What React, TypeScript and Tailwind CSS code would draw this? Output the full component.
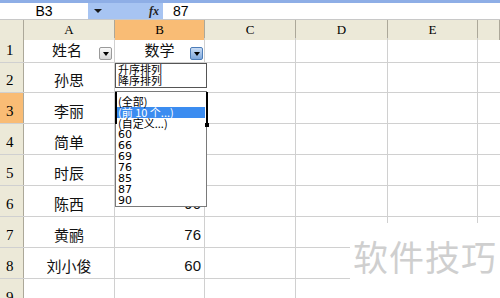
import React from 'react'

const rows: { n: number; name: string; score: string; h: string }[] = [
  { n: 1, name: '姓名', score: '数学', h: 'h-[25px]' },
  { n: 2, name: '孙思', score: '', h: 'h-[30px]' },
  { n: 3, name: '李丽', score: '87', h: 'h-[31px]' },
  { n: 4, name: '简单', score: '', h: 'h-[31px]' },
  { n: 5, name: '时辰', score: '', h: 'h-[31px]' },
  { n: 6, name: '陈西', score: '90', h: 'h-[31px]' },
  { n: 7, name: '黄鹂', score: '76', h: 'h-[31px]' },
  { n: 8, name: '刘小俊', score: '60', h: 'h-[31px]' },
  { n: 9, name: '', score: '', h: 'h-[31px]' },
]

const cols = ['A', 'B', 'C', 'D', 'E', '']

const serif = { fontFamily: '"Liberation Serif", "DejaVu Serif", serif' }
const cjk = { fontFamily: '"Noto Sans CJK SC", "Noto Sans", sans-serif' }

function FilterButton({ active }: { active?: boolean }) {
  return (
    <div
      className={
        'w-[13px] h-[13px] rounded-[2px] border flex items-center justify-center ' +
        (active
          ? 'border-[#4d7db8] bg-gradient-to-b from-[#c9dcf4] to-[#7ea7db]'
          : 'border-[#9a9a9a] bg-gradient-to-b from-[#fafafa] to-[#d6d6d6]')
      }
    >
      <div className="w-0 h-0 border-l-[3px] border-r-[3px] border-t-[4px] border-l-transparent border-r-transparent border-t-black" />
    </div>
  )
}

function FilterDropdown() {
  const items = ['60', '66', '69', '76', '85', '87', '90']
  return (
    <div className="absolute left-[115px] top-[63px] w-[92px] flex flex-col text-black">
      <div className="h-[25px] bg-white border border-[#555] px-[2px] text-[11px] leading-[11px]" style={cjk}>
        <div>升序排列</div>
        <div>降序排列</div>
      </div>
      <div className="h-[3px] bg-white" />
      <div className="relative h-[116px] bg-white border border-[#7a7a7a] pt-[4px] px-[1px]">
        <div className="absolute -left-[1px] top-0 w-[2px] h-[32px] bg-black" />
        <div className="absolute -right-[2px] top-0 w-[2px] h-[33px] bg-black" />
        <div className="absolute -right-[3px] top-[31px] w-[4px] h-[4px] bg-black" />
        <div className="h-[11px] leading-[11px] text-[11px] px-[1px]" style={cjk}>(全部)</div>
        <div className="h-[11px] leading-[11px] text-[11px] px-[1px] bg-[#3b8cf0] text-white" style={cjk}>(前 10 个...)</div>
        <div className="h-[11px] leading-[11px] text-[11px] px-[1px]" style={cjk}>(自定义...)</div>
        {items.map(v => (
          <div key={v} className="h-[11px] leading-[11px] text-[11px] px-[1px]" style={{ fontFamily: '"DejaVu Sans", sans-serif' }}>
            {v}
          </div>
        ))}
      </div>
    </div>
  )
}

export default function App() {
  return (
    <div className="relative w-[500px] h-[298px] overflow-hidden bg-white">
      {/* Formula bar */}
      <div className="h-[20px] flex bg-[#a7c4f2] border-t-[3px] border-[#8eaee6] border-b border-b-[#c8c8c8]">
        <div className="w-[88px] bg-white flex items-center justify-center text-[14px] text-black" style={{ fontFamily: '"Liberation Sans", sans-serif' }}>
          B3
        </div>
        <div className="w-[75px] flex items-center justify-between pl-[6px] pr-[4px]">
          <div className="w-0 h-0 border-l-[4px] border-r-[4px] border-t-[4px] border-l-transparent border-r-transparent border-t-[#1a1a1a]" />
          <span className="text-[12px] italic font-bold text-[#222]" style={serif}>fx</span>
        </div>
        <div className="flex-1 bg-white flex items-center pl-[10px] text-[14px] text-black" style={{ fontFamily: '"Liberation Sans", sans-serif' }}>
          87
        </div>
      </div>

      {/* Column headers */}
      <div className="grid grid-cols-[24px_91px_90px_91px_92px_90px_22px] h-[18px] border-b border-[#aca899] text-[13px] text-black" style={serif}>
        <div className="bg-[#ece9d8] border-r border-[#aca899]" />
        {cols.map((c, i) => (
          <div
            key={i}
            className={
              'flex items-center justify-center border-r border-[#aca899] ' +
              (c === 'B' ? 'bg-[#f9bc75]' : 'bg-[#ece9d8]')
            }
          >
            {c}
          </div>
        ))}
      </div>

      {/* Rows */}
      {rows.map(r => (
        <div key={r.n} className={'grid grid-cols-[24px_91px_90px_91px_92px_90px_22px] border-b border-[#d0d0d0] ' + r.h}>
          <div
            className={
              'flex items-end pl-[6px] pb-[1px] text-[15px] text-black border-r border-[#aca899] ' +
              (r.n === 3 ? 'bg-[#f9bc75]' : 'bg-[#ece9d8]')
            }
            style={serif}
          >
            {r.n}
          </div>
          <div className="relative flex items-end justify-center pb-[1px] text-[15px] text-[#111] border-r border-[#d0d0d0]" style={cjk}>
            <span className={r.n === 1 ? 'mr-[4px]' : ''}>{r.name}</span>
            {r.n === 1 && (
              <div className="absolute right-[2px] bottom-[2px]">
                <FilterButton />
              </div>
            )}
          </div>
          <div
            className={
              'relative flex items-end pb-[1px] text-[#111] border-r border-[#d0d0d0] ' +
              (r.n === 1 ? 'justify-center text-[15px]' : 'justify-end pr-[3px] text-[15px]')
            }
            style={r.n === 1 ? cjk : { fontFamily: '"Liberation Sans", sans-serif' }}
          >
            <span>{r.score}</span>
            {r.n === 1 && (
              <div className="absolute right-[1px] bottom-[2px]">
                <FilterButton active />
              </div>
            )}
          </div>
          <div className="border-r border-[#d0d0d0]" />
          <div className="border-r border-[#d0d0d0]" />
          <div className="border-r border-[#d0d0d0]" />
          <div />
        </div>
      ))}

      <FilterDropdown />

      {/* Watermark */}
      <div className="absolute left-[350px] top-[223px] w-[150px] h-[75px] bg-white flex items-center justify-center pb-[8px]">
        <span className="text-[35px] text-[#cfcfcf] tracking-[1px]" style={cjk}>软件技巧</span>
      </div>
    </div>
  )
}
